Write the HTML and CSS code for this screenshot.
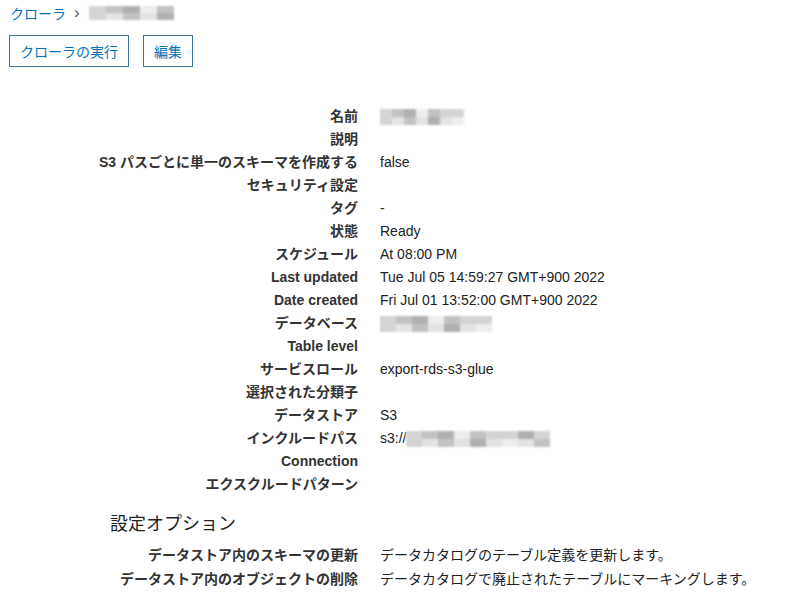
FILE: index.html
```html
<!DOCTYPE html>
<html lang="ja">
<head>
    <meta charset="UTF-8">
    <meta name="viewport" content="width=device-width, initial-scale=1.0">
    <title>クローラ</title>
    <link rel="stylesheet" href="styles.css">
</head>
<body>

    <!-- パンくず -->
    <div class="breadcrumb">
        <a class="crumb-link" href="#">クローラ</a>
        <span class="crumb-sep">›</span>
        <span class="mosaic mosaic-crumb"><i></i><i></i><i></i><i></i><i></i><i></i><i></i><i></i><i></i><i></i></span>
    </div>

    <div class="actions">
        <button class="btn">クローラの実行</button>
        <button class="btn">編集</button>
    </div>

    <!-- 詳細 -->
    <dl class="details">
        <dt>名前</dt>
        <dd><span class="mosaic mosaic-name"><i></i><i></i><i></i><i></i><i></i><i></i><i></i><i></i><i></i><i></i><i></i><i></i><i></i><i></i></span></dd>
        <dt>説明</dt><dd></dd>
        <dt>S3 パスごとに単一のスキーマを作成する</dt><dd>false</dd>
        <dt>セキュリティ設定</dt><dd></dd>
        <dt>タグ</dt><dd>-</dd>
        <dt>状態</dt><dd>Ready</dd>
        <dt>スケジュール</dt><dd>At 08:00 PM</dd>
        <dt>Last updated</dt><dd>Tue Jul 05 14:59:27 GMT+900 2022</dd>
        <dt>Date created</dt><dd>Fri Jul 01 13:52:00 GMT+900 2022</dd>
        <dt>データベース</dt>
        <dd><span class="mosaic mosaic-db"><i></i><i></i><i></i><i></i><i></i><i></i><i></i><i></i><i></i><i></i><i></i><i></i><i></i><i></i></span></dd>
        <dt>Table level</dt><dd></dd>
        <dt>サービスロール</dt><dd>export-rds-s3-glue</dd>
        <dt>選択された分類子</dt><dd></dd>
        <dt>データストア</dt><dd>S3</dd>
        <dt>インクルードパス</dt>
        <dd>s3://<span class="mosaic mosaic-path"><i></i><i></i><i></i><i></i><i></i><i></i><i></i><i></i><i></i><i></i><i></i><i></i><i></i><i></i><i></i><i></i><i></i><i></i></span></dd>
        <dt>Connection</dt><dd></dd>
        <dt>エクスクルードパターン</dt><dd></dd>
    </dl>

    <h2 class="section-title">設定オプション</h2>

    <dl class="details options">
        <dt>データストア内のスキーマの更新</dt><dd>データカタログのテーブル定義を更新します。</dd>
        <dt>データストア内のオブジェクトの削除</dt><dd>データカタログで廃止されたテーブルにマーキングします。</dd>
    </dl>

</body>
</html>
```

FILE: styles.css
```css
/* --- Base --- */
* {
    margin: 0;
    padding: 0;
    box-sizing: border-box;
}

body {
    font-family: 'Liberation Sans', 'Noto Sans CJK JP', sans-serif;
    font-size: 14px;
    color: #222;
    background-color: #ffffff;
    padding: 4px 0 0 10px;
}

/* --- Breadcrumb --- */
.breadcrumb {
    display: flex;
    align-items: center;
    height: 18px;
    font-size: 14px;
}

.crumb-link {
    color: #0073bb;
    text-decoration: none;
}

.crumb-sep {
    color: #555;
    margin: 0 9px 0 8px;
    font-size: 17px;
    line-height: 18px;
}

/* --- Buttons --- */
.actions {
    display: flex;
    gap: 14px;
    margin-top: 13px;
    margin-left: -1px;
}

.btn {
    height: 32px;
    padding: 0 10px;
    border: 1px solid #3f7391;
    background: #fff;
    color: #0073bb;
    font-family: inherit;
    font-size: 14px;
    cursor: pointer;
}

/* --- Detail list --- */
.details {
    display: grid;
    grid-template-columns: 348px 1fr;
    column-gap: 22px;
    line-height: 23px;
    margin-top: 38px;
}

.details dt {
    text-align: right;
    font-weight: bold;
    color: #333;
}

.details dd {
    min-height: 23px;
    display: flex;
    align-items: center;
}

.section-title {
    font-size: 18px;
    font-weight: normal;
    color: #222;
    margin: 17px 0 0 100px;
    line-height: 22px;
}

.options {
    margin-top: 8px;
    line-height: 24px;
}

.options dd {
    min-height: 24px;
}

/* --- ぼかし (モザイク) --- */
.mosaic {
    display: inline-grid;
    grid-auto-flow: column;
    grid-template-rows: 8px 8px;
    filter: blur(0.8px);
}

.mosaic i {
    display: block;
    width: 12px;
    background: #d4d4d4;
}

.mosaic i:nth-child(3n) { background: #c2c2c2; }
.mosaic i:nth-child(4n) { background: #e3e3e3; }
.mosaic i:nth-child(5n) { background: #b0b0b0; }
.mosaic i:nth-child(7n) { background: #ededed; }

.mosaic-crumb { grid-template-rows: 7px 7px; }
.mosaic-crumb i { width: 17px; }
.mosaic-name i { width: 12px; }
.mosaic-db i { width: 16px; }
.mosaic-path i { width: 16px; }
```
